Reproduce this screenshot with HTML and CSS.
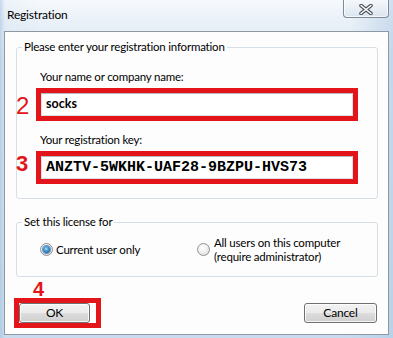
FILE: index.html
```html
<!DOCTYPE html>
<html>
<head>
<meta charset="utf-8">
<link rel="stylesheet" href="styles.css">
</head>
<body>
<div class="window">
  <div class="titlebar">
    <span class="title">Registration</span>
    <div class="close">
      <svg width="14" height="11" viewBox="0 0 14 11">
        <path d="M2 1.5 L12 9.5 M12 1.5 L2 9.5" stroke="#4a4f57" stroke-width="3.6" stroke-linecap="round" fill="none"/>
        <path d="M2 1.5 L12 9.5 M12 1.5 L2 9.5" stroke="#ffffff" stroke-width="1.6" stroke-linecap="round" fill="none"/>
      </svg>
    </div>
  </div>
  <div class="client">
    <fieldset class="group g-reg">
      <legend>Please enter your registration information</legend>
      <div class="label">Your name or company name:</div>
      <div class="row r-name">
        <span class="num n2">2</span>
        <div class="mark"><div class="input name">socks</div></div>
      </div>
      <div class="label l-key">Your registration key:</div>
      <div class="row r-key">
        <span class="num n3">3</span>
        <div class="mark"><div class="input key">ANZTV-5WKHK-UAF28-9BZPU-HVS73</div></div>
      </div>
    </fieldset>
    <fieldset class="group g-lic">
      <legend>Set this license for</legend>
      <div class="options">
        <div class="opt opt1"><span class="radio checked"></span><span class="opt-text">Current user only</span></div>
        <div class="opt opt2"><span class="radio"></span><span class="opt-text two">All users on this computer<br>(require administrator)</span></div>
      </div>
    </fieldset>
    <div class="n4">4</div>
    <div class="buttons">
      <div class="mark mark-ok"><div class="btn ok">OK</div></div>
      <div class="btn cancel">Cancel</div>
    </div>
  </div>
</div>
</body>
</html>
```
FILE: styles.css
```css
* { box-sizing: border-box; }
html, body { margin: 0; padding: 0; }
body {
  width: 393px;
  height: 338px;
  overflow: hidden;
  font-family: Lato, "Open Sans", sans-serif;
  font-size: 11.5px;
  letter-spacing: -0.2px;
  color: #000;
  background:
    linear-gradient(to right, rgba(160,190,220,0.55) 0, rgba(200,220,238,0.2) 5px, rgba(255,255,255,0) 40px, rgba(255,255,255,0) 350px, rgba(170,200,228,0.5) 393px),
    linear-gradient(to bottom, #f6f9fc 0, #eaf1f8 20px, #dbe7f3 60px, #d3e2f1 200px, #c9dbee 338px);
}
.window {
  width: 393px;
  height: 338px;
  display: flex;
  flex-direction: column;
}
.titlebar {
  height: 31px;
  display: flex;
  align-items: flex-start;
  justify-content: space-between;
}
.title {
  margin-left: 7px;
  margin-top: 6px;
  line-height: 18px;
  font-size: 12px;
}
.close {
  width: 46px;
  height: 19px;
  margin-right: 4px;
  margin-top: -1px;
  border: 1px solid #7d8a9a;
  border-top: none;
  border-radius: 0 0 4px 4px;
  background: linear-gradient(to bottom, #f7f9fb 0, #e8eef5 55%, #dce5ee 100%);
  box-shadow: inset 0 0 0 1px rgba(255,255,255,0.7);
  display: flex;
  align-items: center;
  justify-content: center;
  padding-top: 2px;
}
.client {
  margin: 0 4px 3px 4px;
  height: 304px;
  border: 1px solid #8e98a3;
  background: #fdfdfd;
  padding-top: 7px;
  display: flex;
  flex-direction: column;
}
fieldset.group {
  margin: 0 10px 0 11px;
  padding: 0;
  border: 1px solid #d5dfe5;
  border-radius: 3px;
  min-width: 0;
}
legend {
  margin-left: 5px;
  padding: 0 2px;
  line-height: 16px;
}
.g-reg { padding: 14px 0 14px 0 !important; }
.label {
  margin-left: 23px;
  line-height: 16px;
}
.l-key { margin-top: 11px; }
.row {
  position: relative;
  margin-top: 3px;
}
.num {
  position: absolute;
  font-family: "Liberation Sans", Arial, sans-serif;
  letter-spacing: 0;
  color: #e3151b;
}
.n2 {
  left: -1px;
  top: 6px;
  font-size: 24px;
  line-height: 24px;
}
.n3 {
  left: -1px;
  top: 2px;
  font-size: 22px;
  line-height: 22px;
  font-weight: bold;
}
.mark {
  border: 5px solid #e3151b;
}
.row .mark {
  margin-left: 19px;
  width: 322px;
  height: 33px;
}
.input {
  height: 23px;
  background: #fff;
  border: 1px solid #dde2e8;
  border-top-color: #b5b9c0;
  padding-left: 4px;
  display: flex;
  align-items: center;
  white-space: nowrap;
}
.name {
  font-weight: bold;
  font-size: 12.5px;
  letter-spacing: 0;
  padding-bottom: 3px;
}
.key {
  font-family: "Liberation Mono", "Courier New", monospace;
  font-weight: bold;
  font-size: 15px;
  letter-spacing: 0;
}
.g-lic {
  margin-top: 15px !important;
  padding: 6px 0 13px 0 !important;
}
.options {
  display: flex;
  align-items: center;
  padding-left: 23px;
}
.opt {
  display: flex;
  align-items: center;
}
.opt1 { width: 157px; gap: 3px; }
.opt2 { gap: 4px; }
.opt-text { line-height: 16px; }
.opt-text.two { line-height: 13.5px; }
.radio {
  width: 13px;
  height: 13px;
  border-radius: 50%;
  border: 1px solid #8f9296;
  background: radial-gradient(circle at 40% 35%, #ffffff 0, #f2f2f2 40%, #d4d4d4 100%);
  flex: none;
  display: flex;
  align-items: center;
  justify-content: center;
}
.radio.checked::after {
  content: "";
  width: 7px;
  height: 7px;
  border-radius: 50%;
  background: radial-gradient(circle at 45% 40%, #a9dcfb 0, #3a8fd0 45%, #0e3f78 100%);
  box-shadow: 0 0 0 1px #6b8bb0;
}
.n4 {
  margin-top: 4px;
  margin-left: 28px;
  font-family: "Liberation Sans", Arial, sans-serif;
  font-weight: bold;
  font-size: 20px;
  line-height: 17px;
  letter-spacing: 0;
  color: #e3151b;
  height: 17px;
}
.buttons {
  display: flex;
  align-items: center;
  justify-content: space-between;
  margin: 0 11px 0 9px;
}
.mark-ok {
  padding-right: 6px;
}
.btn {
  height: 20px;
  border: 1px solid #707070;
  border-radius: 3px;
  background: linear-gradient(to bottom, #f2f2f2 0, #ebebeb 50%, #dddddd 51%, #cfcfcf 100%);
  box-shadow: inset 0 0 0 1px rgba(255,255,255,0.8);
  display: flex;
  align-items: center;
  justify-content: center;
  font-size: 12px;
  line-height: 16px;
}
.ok { width: 71px; }
.cancel { width: 73px; }
```
